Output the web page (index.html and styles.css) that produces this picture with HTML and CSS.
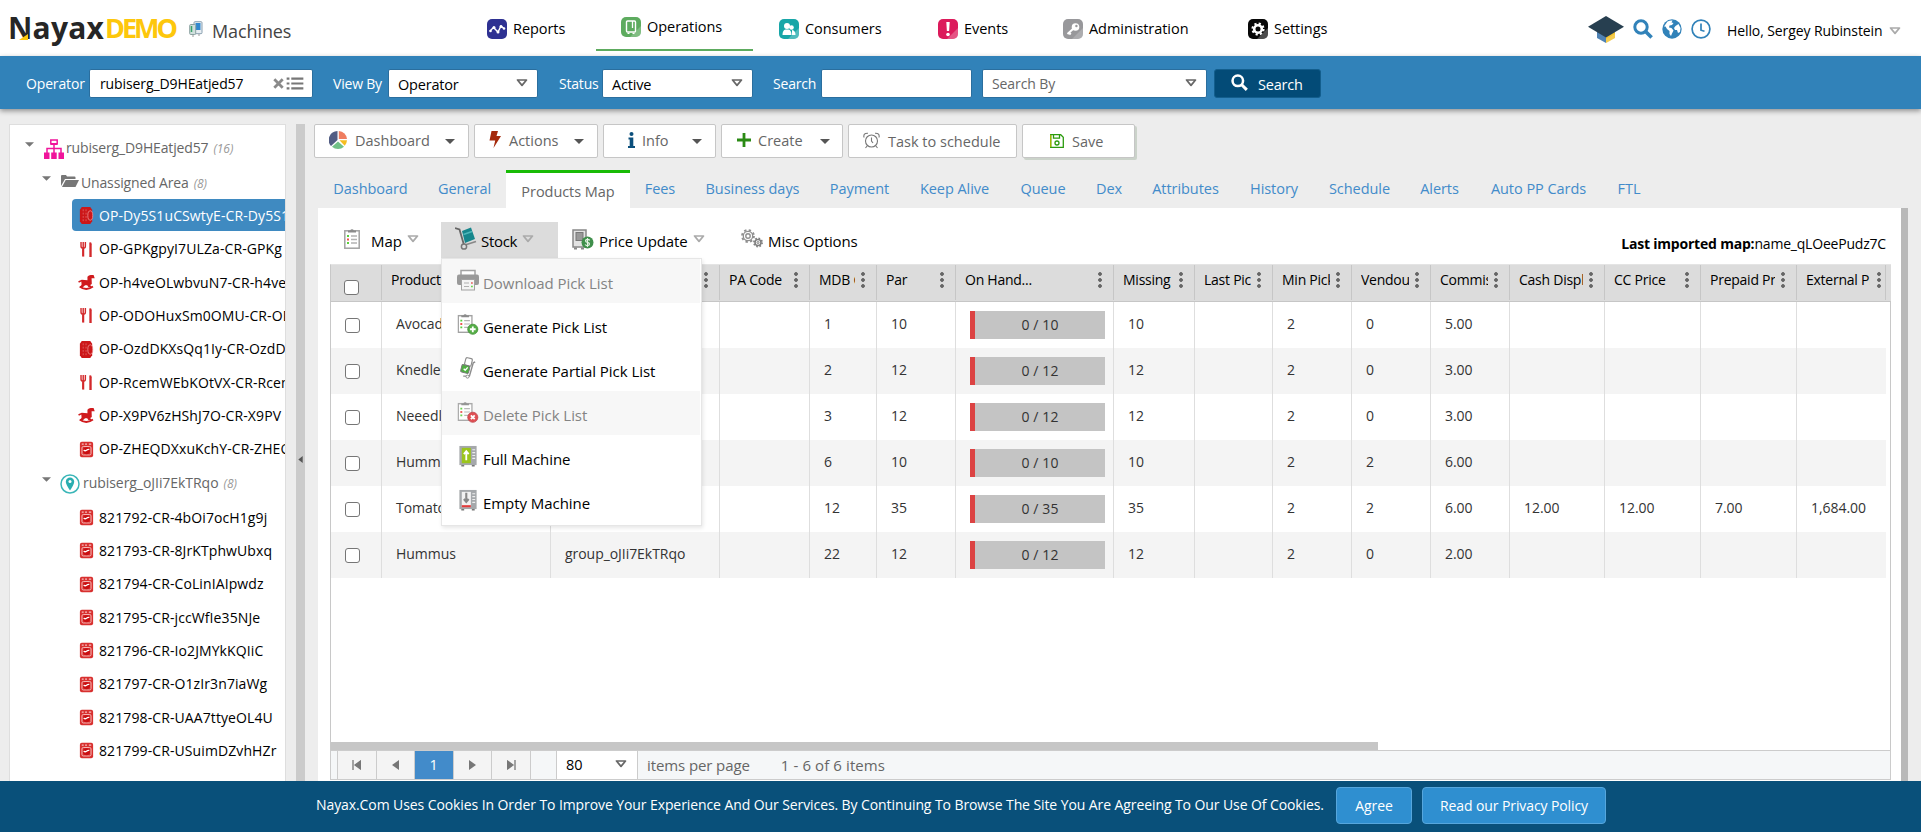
FILE: index.html
```html
<!DOCTYPE html>
<html lang="en">
<head>
<meta charset="utf-8">
<title>Machines</title>
<link rel="stylesheet" href="styles.css">
</head>
<body>
<svg class="defs" width="0" height="0">
  <defs>
    <symbol id="tri" viewBox="0 0 12 8"><path d="M1.5 1h9L6 6.4z" fill="none" stroke="currentColor" stroke-width="1.7" stroke-linejoin="round"/></symbol>
    <symbol id="caret" viewBox="0 0 10 5"><path d="M0 0h10L5 5z" fill="currentColor"/></symbol>
    <symbol id="search" viewBox="0 0 20 20"><circle cx="8" cy="8" r="6.2" fill="none" stroke="currentColor" stroke-width="3"/><path d="M12.6 12.6l6 6" stroke="currentColor" stroke-width="3.6"/></symbol>
    <symbol id="list" viewBox="0 0 18 14"><path d="M0 1.7h3M0 7h3M0 12.3h3M5 1.7h13M5 7h13M5 12.3h13" stroke="currentColor" stroke-width="2.4"/></symbol>
    <symbol id="barrel" viewBox="0 0 16 18"><path d="M3 0h9l2 3v12l-2 3H3L1 15V3z" fill="#cc1719"/><path d="M4.500 2.500v13M7.500 2.500v13" stroke="#e36a6b" stroke-width=".8" stroke-dasharray="2 1.500"/><ellipse cx="12" cy="9" rx="2.600" ry="5" fill="#cc1719" stroke="#ef9a9a" stroke-width=".8"/></symbol>
    <symbol id="fork" viewBox="0 0 16 18"><path d="M2.200 1v4.500q0 2 2.300 2t2.300-2V1M4.500 1v15" fill="none" stroke="#d3292b" stroke-width="1.500"/><path d="M4.500 8v8.500" stroke="#d3292b" stroke-width="2.200"/><path d="M11 1.500q2.500-1 2.500 2V17H11z" fill="#d3292b"/></symbol>
    <symbol id="horse" viewBox="0 0 18 18"><path d="M10 6.500V3q1.500-2.300 4-2h2.500l1.200 3.600h-3.300l.2 6-1.600 1 1.500 2.400h-3.300L9.700 12H7.500l-2.400 2H2.300l1.500-3-.3-3L1 9.200.2 7.700 4 6z" fill="#d01b1e"/><path d="M1.800 13.200q6.800 5.300 14 0" fill="none" stroke="#d01b1e" stroke-width="2"/></symbol>
    <symbol id="washer" viewBox="0 0 16 18"><rect x="1" y=".8" width="14" height="16.400" rx="2" fill="#d8302f"/><path d="M3 3.300h2M6.500 3.300h2M10.500 3.300h2.500" stroke="#f6c1c0" stroke-width="1.200"/><rect x="3.200" y="5.800" width="9.600" height="9" rx="1.500" fill="none" stroke="#f6c1c0" stroke-width="1"/><circle cx="8" cy="10.400" r="3.700" fill="#c90f12"/><path d="M5 9.500q1.500 1.500 3 .3t3-.8" fill="none" stroke="#fff" stroke-width="1.300"/></symbol>
    <symbol id="clip" viewBox="0 0 16 21"><rect x=".8" y="2.800" width="14.400" height="17.400" fill="#fff" stroke="#a2a2a2" stroke-width="1.500"/><path d="M4 4.500V2.500h2.200a1.900 1.900 0 0 1 3.600 0H12v2z" fill="#8b8b8b"/><path d="M3 8h2M3 15h2" stroke="#5bd03c" stroke-width="2"/><path d="M3 11.500h2" stroke="#ee5350" stroke-width="2"/><path d="M7 8h6M7 11.500h6M7 15h6" stroke="#b3b3b3" stroke-width="1.300"/></symbol>
  </defs>
</svg>

<header class="top">
  <div class="brand">
    <span class="logo">Nayax<svg class="logo-mark" viewBox="0 0 10 6"><path d="M0 6L9 0v6z" fill="#fdc70c"/></svg></span><span class="logo-demo">DEMO</span>
    <svg class="i-machines" viewBox="0 0 14 16"><rect x="5" y=".7" width="8" height="12" rx="1" fill="#e8eef3" stroke="#8aa0b0"/><rect x="6.500" y="2" width="5" height="7" fill="#3188cf"/><rect x=".7" y="3.500" width="6" height="10" rx="1" fill="#cfe0dc" stroke="#8aa0a0"/><path d="M2.500 5v6" stroke="#38a36a" stroke-width="1.500"/><path d="M3 15h2M9 14h2" stroke="#999"/></svg>
    <span class="page-name">Machines</span>
  </div>
  <nav class="nav">
    <a class="nav-item"><svg viewBox="0 0 20 20"><rect width="20" height="20" rx="5" fill="#2e3192"/><path d="M3 12l3.500-3.500L11 13l3-6 3 2.500" fill="none" stroke="#fff" stroke-width="1.400"/><g fill="#fff"><circle cx="3.500" cy="12" r="1.300"/><circle cx="7" cy="8.500" r="1.500"/><circle cx="11" cy="13" r="1.500"/><circle cx="14" cy="7.500" r="1.500"/><circle cx="17" cy="9.500" r="1.300"/></g></svg>Reports</a>
    <a class="nav-item active"><svg viewBox="0 0 20 20"><rect width="20" height="20" rx="5" fill="#5dab5f"/><path d="M20 9v6a5 5 0 0 1-5 5H9z" fill="#fff" opacity=".22"/><rect x="5.500" y="4" width="9" height="11" rx="1" fill="none" stroke="#fff" stroke-width="1.400"/><path d="M11.500 4v7M6.500 16.300h2M11.500 16.300h2" stroke="#fff" stroke-width="1.300"/></svg>Operations</a>
    <a class="nav-item"><svg viewBox="0 0 20 20"><rect width="20" height="20" rx="5" fill="#18a6a8"/><g fill="#fff"><circle cx="8" cy="7" r="3"/><path d="M3.500 16q0-5 3-5.500h3q3 .5 3 5.500z"/><circle cx="12.500" cy="8.500" r="2.300"/><path d="M13 16v-5q3.500.5 3.500 5z"/></g><path d="M20 9v6a5 5 0 0 1-5 5H9z" fill="#fff" opacity=".25"/></svg>Consumers</a>
    <a class="nav-item"><svg viewBox="0 0 20 20"><rect width="20" height="20" rx="5" fill="#dc1a5b"/><path d="M8.300 3h3.400l-.6 9H8.900z" fill="#fff"/><circle cx="10" cy="15.500" r="1.800" fill="#fff"/><path d="M20 9v6a5 5 0 0 1-5 5H9z" fill="#fff" opacity=".25"/></svg>Events</a>
    <a class="nav-item"><svg viewBox="0 0 20 20"><rect width="20" height="20" rx="5" fill="#98989b"/><circle cx="12.500" cy="8" r="3.800" fill="#fff"/><circle cx="13.400" cy="7" r="1.200" fill="#98989b"/><path d="M10.500 9.500L4.500 15M6 13.500l1.700 2" stroke="#fff" stroke-width="2"/><path d="M20 9v6a5 5 0 0 1-5 5H9z" fill="#fff" opacity=".2"/></svg>Administration</a>
    <a class="nav-item"><svg viewBox="0 0 20 20"><rect width="20" height="20" rx="5" fill="#080808"/><path d="M20 9v6a5 5 0 0 1-5 5H9z" fill="#fff" opacity=".28"/><circle cx="10" cy="10" r="5.500" fill="none" stroke="#fff" stroke-width="2.200" stroke-dasharray="2.160 2.160"/><circle cx="10" cy="10" r="3.800" fill="none" stroke="#fff" stroke-width="2.600"/></svg>Settings</a>
  </nav>
  <div class="user">
    <svg class="i-cap" viewBox="0 0 36 28"><path d="M9 14v8l9 5V14z" fill="#4f82b4"/><path d="M27 14v8l-9 5V14z" fill="#f3c331"/><path d="M27 18v4l-9 5v-4z" fill="#fff" opacity=".15"/><path d="M18 0l18 10.800L18 21.500 0 10.800z" fill="#273f50"/></svg>
    <svg class="i-20"><use href="#search"/></svg>
    <svg class="i-20" viewBox="0 0 20 20"><circle cx="10" cy="10" r="9.700" fill="currentColor"/><path d="M5.500 2.500q3-1.500 5-1l-1 2 2 .5-1.500 2-2.500.500-.5 2 2.500.5 2 2.500-1.500 3-1 2.500-1.500-2v-3L5 10 3.500 7.500 2 7.500zM13.500 7l3-2 2 4-.5 4-2 1-1-3h-2l-1-2z" fill="#fff"/></svg>
    <svg class="i-20" viewBox="0 0 20 20"><circle cx="10" cy="10" r="8.900" fill="none" stroke="currentColor" stroke-width="1.700"/><path d="M10 4.500v6.700l3.500 1" fill="none" stroke="currentColor" stroke-width="1.700"/></svg>
    <span class="hello">Hello, Sergey Rubinstein</span>
    <svg class="tri pale"><use href="#tri"/></svg>
  </div>
</header>

<section class="filters">
  <label class="f-label l-operator">Operator</label>
  <div class="field w-operator"><span class="field-text">rubiserg_D9HEatjed57</span><svg class="i-clear" viewBox="0 0 11 11"><path d="M1.300 1.300l8.400 8.400M9.700 1.300L1.300 9.700" stroke="#8a8a8a" stroke-width="2.800"/></svg><svg class="i-list"><use href="#list"/></svg></div>
  <label class="f-label l-view">View By</label>
  <div class="field w-view"><span class="field-text">Operator</span><svg class="tri"><use href="#tri"/></svg></div>
  <label class="f-label l-status">Status</label>
  <div class="field w-status"><span class="field-text">Active</span><svg class="tri"><use href="#tri"/></svg></div>
  <label class="f-label l-search">Search</label>
  <div class="field w-search"></div>
  <div class="field w-by"><span class="field-text muted">Search By</span><svg class="tri"><use href="#tri"/></svg></div>
  <button class="search-btn"><svg><use href="#search"/></svg>Search</button>
</section>

<main class="main">
  <aside class="tree">
    <div class="node root"><svg class="caret"><use href="#caret"/></svg><svg class="i-org" viewBox="0 0 20 20"><g fill="none" stroke="#f0149b" stroke-width="1.500"><rect x="6.800" y="1" width="6.400" height="4"/><path d="M10 5v9M3 14V9.500h14V14"/></g><g fill="#f0149b"><path d="M7 4h6v2H7z"/><rect y="13.500" width="5.500" height="6.500"/><rect x="7.200" y="13.500" width="5.500" height="6.500"/><rect x="14.500" y="13.500" width="5.500" height="6.500"/></g></svg><span>rubiserg_D9HEatjed57</span><i>(16)</i></div>
    <div class="node area"><svg class="caret"><use href="#caret"/></svg><svg class="i-folder" viewBox="0 0 18 12"><path d="M0 11V1q0-1 1-1h4l1 1.500h7.500q1 0 1 1V4H4z" fill="#777"/><path d="M4.700 5H18l-3.500 7H1z" fill="#777"/></svg><span>Unassigned Area</span><i>(8)</i></div>
    <div class="leaf selected"><svg><use href="#barrel"/></svg><span>OP-Dy5S1uCSwtyE-CR-Dy5S1</span></div>
    <div class="leaf"><svg><use href="#fork"/></svg><span>OP-GPKgpyI7ULZa-CR-GPKg</span></div>
    <div class="leaf"><svg><use href="#horse"/></svg><span>OP-h4veOLwbvuN7-CR-h4ve</span></div>
    <div class="leaf"><svg><use href="#fork"/></svg><span>OP-ODOHuxSm0OMU-CR-OD</span></div>
    <div class="leaf"><svg><use href="#barrel"/></svg><span>OP-OzdDKXsQq1Iy-CR-OzdD</span></div>
    <div class="leaf"><svg><use href="#fork"/></svg><span>OP-RcemWEbKOtVX-CR-Rcem</span></div>
    <div class="leaf"><svg><use href="#horse"/></svg><span>OP-X9PV6zHShJ7O-CR-X9PV</span></div>
    <div class="leaf"><svg><use href="#washer"/></svg><span>OP-ZHEQDXxuKchY-CR-ZHEQ</span></div>
    <div class="node site"><svg class="caret"><use href="#caret"/></svg><svg class="i-pin" viewBox="0 0 20 20"><circle cx="10" cy="10" r="9" fill="none" stroke="#3bb6b8" stroke-width="1.500"/><path d="M10 16.500Q5.800 10.500 5.800 7.800a4.200 4.200 0 0 1 8.400 0Q14.200 10.500 10 16.500z" fill="#2aaeb0"/><circle cx="10" cy="7.500" r="1.500" fill="#fff"/></svg><span>rubiserg_oJIi7EkTRqo</span><i>(8)</i></div>
    <div class="leaf"><svg><use href="#washer"/></svg><span>821792-CR-4bOi7ocH1g9j</span></div>
    <div class="leaf"><svg><use href="#washer"/></svg><span>821793-CR-8JrKTphwUbxq</span></div>
    <div class="leaf"><svg><use href="#washer"/></svg><span>821794-CR-CoLinIAIpwdz</span></div>
    <div class="leaf"><svg><use href="#washer"/></svg><span>821795-CR-jccWfIe35NJe</span></div>
    <div class="leaf"><svg><use href="#washer"/></svg><span>821796-CR-Io2JMYkKQIiC</span></div>
    <div class="leaf"><svg><use href="#washer"/></svg><span>821797-CR-O1zIr3n7iaWg</span></div>
    <div class="leaf"><svg><use href="#washer"/></svg><span>821798-CR-UAA7ttyeOL4U</span></div>
    <div class="leaf"><svg><use href="#washer"/></svg><span>821799-CR-USuimDZvhHZr</span></div>
  </aside>
  <div class="splitter"><svg viewBox="0 0 5 8"><path d="M5 0v8L0 4z" fill="#555"/></svg></div>

  <section class="content">
    <div class="actions">
      <button class="btn b-dash"><svg class="i-pie" viewBox="0 0 18 18"><path d="M8.500 9V0A9 9 0 0 0 2 15z" fill="#525d84"/><path d="M9.800 8V0A8.500 8.500 0 0 1 18 8z" fill="#ef7d60"/><path d="M10.500 9.300H18a8.500 8.500 0 0 1-2.300 5.500z" fill="#f5bd1f"/><path d="M9 10.500l6 5.200a9 9 0 0 1-12 0z" fill="#71c087"/></svg><span>Dashboard</span><svg class="drop"><use href="#caret"/></svg></button>
      <button class="btn b-act"><svg class="i-bolt" viewBox="0 0 12 17"><path d="M2.500 0H9L7.500 5H12L4.500 17l1.700-7.500H.500z" fill="#a52a0c"/></svg><span>Actions</span><svg class="drop"><use href="#caret"/></svg></button>
      <button class="btn b-info"><svg class="i-info" viewBox="0 0 7 16"><circle cx="3.500" cy="2" r="2" fill="#0b4f7c"/><path d="M.5 5.500h4.800V14H7v2H0v-2h1.700V7.500H.5z" fill="#0b4f7c"/></svg><span>Info</span><svg class="drop"><use href="#caret"/></svg></button>
      <button class="btn b-create"><svg class="i-plus" viewBox="0 0 14 14"><path d="M7 0v14M0 7h14" stroke="#2a8a14" stroke-width="2.800"/></svg><span>Create</span><svg class="drop"><use href="#caret"/></svg></button>
      <button class="btn b-task"><svg class="i-alarm" viewBox="0 0 17 17" fill="none" stroke="#777" stroke-width="1.100"><circle cx="8.500" cy="9" r="6"/><path d="M8.500 5.500V9l1.500 2M1 5.500Q0 1 5 1.300M16 5.500q1-4.500-4-4.200M4.500 13.500L2.500 16M12.500 13.500l2 2.500"/></svg><span>Task to schedule</span></button>
      <button class="btn b-save"><svg class="i-save" viewBox="0 0 14 14" fill="none" stroke="#2b9b0e" stroke-width="1.300"><path d="M.7.700h10l2.600 2.600v10H.7zM3.500.7v3.500h6V.7"/><circle cx="7" cy="9" r="2"/><path d="M.7 1v12" stroke="#a4b800"/></svg><span>Save</span></button>
    </div>

    <div class="tabs">
      <a>Dashboard</a><a>General</a><a class="on">Products Map</a><a>Fees</a><a>Business days</a><a>Payment</a><a>Keep Alive</a><a>Queue</a><a>Dex</a><a>Attributes</a><a>History</a><a>Schedule</a><a>Alerts</a><a>Auto PP Cards</a><a>FTL</a>
    </div>

    <div class="panel">
      <div class="menu">
        <div class="m-item m-map"><svg class="i-clip"><use href="#clip"/></svg><span>Map</span><svg class="tri pale"><use href="#tri"/></svg></div>
        <div class="m-item m-stock"><svg class="i-truck" viewBox="0 0 22 23"><path d="M0 1l4.500 1.500L9 18" fill="none" stroke="#666" stroke-width="1.800"/><path d="M7 4l9-3.500L20 12l-10 4z" fill="#16868c"/><path d="M8.500 7.500l8.500-3" stroke="#4fb7bb" stroke-width="1.500"/><path d="M10 18l11-3.500" stroke="#888" stroke-width="1.800"/><circle cx="9" cy="19.500" r="2.600" fill="#ddd" stroke="#777" stroke-width="1.500"/></svg><span>Stock</span><svg class="tri pale"><use href="#tri"/></svg>
          <div class="dropdown">
            <div class="d-item off"><svg viewBox="0 0 22 22"><path d="M4 6V1.500h14V6" fill="#fff" stroke="#999" stroke-width="1.500"/><rect y="5.500" width="22" height="10.500" rx="2" fill="#8f8f8f"/><rect x="4.500" y="10.500" width="13" height="10.500" fill="#f4f4f4" stroke="#999"/><path d="M7 14h5M7 17.500h5" stroke="#aaa"/><path d="M14 14h1.800" stroke="#e5504c" stroke-width="1.600"/><path d="M14 17.500h1.800" stroke="#5bd03c" stroke-width="1.600"/></svg>Download Pick List</div>
            <div class="d-item"><svg viewBox="0 0 22 23"><use href="#clip" width="16" height="21"/><circle cx="16" cy="17" r="5.300" fill="#55ad46" stroke="#3f8f35" stroke-width=".8"/><path d="M16 14v6M13 17h6" stroke="#fff" stroke-width="1.900"/></svg>Generate Pick List</div>
            <div class="d-item"><svg viewBox="0 0 22 23"><rect x="8" y="1" width="7" height="8" rx="1.500" transform="rotate(14 11 5)" fill="#fff" stroke="#8d8d8d" stroke-width="1.200"/><path d="M18.500 5l-2 1L12.500 20H6" fill="none" stroke="#8d8d8d" stroke-width="1.500"/><rect x="4" y="8.500" width="8.500" height="8" rx="1.500" transform="rotate(14 8 12)" fill="#4fae42" stroke="#777"/><path d="M6.500 12.300l1.600 1.600 2.600-3" fill="none" stroke="#fff" stroke-width="1.400"/><circle cx="10.500" cy="20.500" r="1.600" fill="#fff" stroke="#888"/></svg>Generate Partial Pick List</div>
            <div class="d-item off"><svg viewBox="0 0 22 23"><use href="#clip" width="16" height="21"/><circle cx="16" cy="17" r="5.300" fill="#dd3d42" stroke="#b93338" stroke-width=".8"/><path d="M14 15l4 4M18 15l-4 4" stroke="#fff" stroke-width="1.900"/></svg>Delete Pick List</div>
            <div class="d-item"><svg viewBox="0 0 22 23"><rect x="2" y="1" width="18" height="20" fill="#a5a8ab"/><path d="M4 21v1.500h3V21M15 21v1.500h3V21" fill="#777"/><rect x="4.500" y="3" width="9.500" height="16" fill="#9bc51c"/><path d="M9.200 16V7M6.700 9.500l2.500-3 2.500 3" fill="none" stroke="#fff" stroke-width="1.900"/><path d="M15.500 5h3M15.500 8h3M15.500 11h3M15.500 14h3" stroke="#eee" stroke-width="1.200"/></svg>Full Machine</div>
            <div class="d-item"><svg viewBox="0 0 22 23"><rect x="2" y="1" width="18" height="20" fill="#a5a8ab"/><path d="M4 21v1.500h3V21M15 21v1.500h3V21" fill="#777"/><rect x="4.500" y="3" width="9.500" height="16" fill="#f2f2f2"/><path d="M9.200 4v9M6.700 10.500l2.500 3 2.500-3" fill="none" stroke="#888" stroke-width="2.200"/><path d="M4.500 18h9.500" stroke="#e23b3b" stroke-width="2.200"/><path d="M15.500 5h3M15.500 8h3M15.500 11h3M15.500 14h3" stroke="#eee" stroke-width="1.200"/></svg>Empty Machine</div>
          </div>
        </div>
        <div class="m-item m-price"><svg class="i-price" viewBox="0 0 22 21"><rect x="1" y="1" width="13" height="17" fill="#e3e3e3" stroke="#888" stroke-width="1.500"/><rect x="4" y="3.500" width="7" height="8" fill="#999" stroke="#777"/><path d="M2 19.500h3M9 19.500h3" stroke="#888" stroke-width="1.800"/><circle cx="15.500" cy="13.500" r="6" fill="#3f8f4b"/><path d="M17.800 11.300q-.8-1-2.300-1-2 0-2 1.500 0 1.300 2 1.600t2 1.700q0 1.500-2 1.500-1.600 0-2.400-1.100M15.500 9v9" fill="none" stroke="#e3f3e3" stroke-width="1.200"/></svg><span>Price Update</span><svg class="tri pale"><use href="#tri"/></svg></div>
        <div class="m-item m-misc"><svg class="i-gears" viewBox="0 0 22 19" fill="none"><g stroke="#8f8f8f"><circle cx="7" cy="7" r="5.900" stroke-width="2" stroke-dasharray="2.320 2.320"/><circle cx="7" cy="7" r="4.700" stroke-width="1.300"/><circle cx="7" cy="7" r="2.200" stroke-width="1.400"/></g><g stroke="#7f7f7f"><circle cx="17" cy="13.500" r="4.100" stroke-width="1.700" stroke-dasharray="1.610 1.610"/><circle cx="17" cy="13.500" r="3" stroke-width="1.600"/><circle cx="17" cy="13.500" r="1"/></g></svg><span>Misc Options</span></div>
        <div class="imported"><b>Last imported map:</b>name_qLOeePudz7C</div>
      </div>

      <div class="grid">
        <div class="grid-head">
          <table>
            <colgroup><col class="c1"><col class="c2"><col class="c2"><col class="c4"><col class="c5"><col class="c6"><col class="c7"><col class="c8"><col class="c9"><col class="c10"><col class="c11"><col class="c11"><col class="c13"><col class="c14"><col class="c14"><col class="c16"></colgroup>
            <tr><th class="ck"><input type="checkbox"></th><th><div>Product</div></th><th class="dots"></th><th class="dots"><div>PA Code</div></th><th class="dots"><div>MDB Code</div></th><th class="dots"><div>Par</div></th><th class="dots"><div>On Hand...</div></th><th class="dots"><div>Missing</div></th><th class="dots"><div>Last Pick</div></th><th class="dots"><div>Min Pick</div></th><th class="dots"><div>Vendout</div></th><th class="dots"><div>Commission</div></th><th class="dots"><div>Cash Display</div></th><th class="dots"><div>CC Price</div></th><th class="dots"><div>Prepaid Price</div></th><th class="dots end"><div>External Price</div></th></tr>
          </table>
        </div>
        <div class="grid-body">
          <table>
            <colgroup><col class="c1"><col class="c2"><col class="c2"><col class="c4"><col class="c5"><col class="c6"><col class="c7"><col class="c8"><col class="c9"><col class="c10"><col class="c11"><col class="c11"><col class="c13"><col class="c14"><col class="c14"><col class="c16"></colgroup>
            <tr><td class="ck"><input type="checkbox"></td><td>Avocado</td><td></td><td></td><td>1</td><td>10</td><td><div class="bar">0 / 10</div></td><td>10</td><td></td><td>2</td><td>0</td><td>5.00</td><td></td><td></td><td></td><td></td></tr>
            <tr><td class="ck"><input type="checkbox"></td><td>Knedle</td><td></td><td></td><td>2</td><td>12</td><td><div class="bar">0 / 12</div></td><td>12</td><td></td><td>2</td><td>0</td><td>3.00</td><td></td><td></td><td></td><td></td></tr>
            <tr><td class="ck"><input type="checkbox"></td><td>Neeedle</td><td></td><td></td><td>3</td><td>12</td><td><div class="bar">0 / 12</div></td><td>12</td><td></td><td>2</td><td>0</td><td>3.00</td><td></td><td></td><td></td><td></td></tr>
            <tr><td class="ck"><input type="checkbox"></td><td>Hummus</td><td></td><td></td><td>6</td><td>10</td><td><div class="bar">0 / 10</div></td><td>10</td><td></td><td>2</td><td>2</td><td>6.00</td><td></td><td></td><td></td><td></td></tr>
            <tr><td class="ck"><input type="checkbox"></td><td>Tomato</td><td></td><td></td><td>12</td><td>35</td><td><div class="bar">0 / 35</div></td><td>35</td><td></td><td>2</td><td>2</td><td>6.00</td><td>12.00</td><td>12.00</td><td>7.00</td><td>1,684.00</td></tr>
            <tr><td class="ck"><input type="checkbox"></td><td>Hummus</td><td>group_oJIi7EkTRqo</td><td></td><td>22</td><td>12</td><td><div class="bar">0 / 12</div></td><td>12</td><td></td><td>2</td><td>0</td><td>2.00</td><td></td><td></td><td></td><td></td></tr>
          </table>
          <div class="hscroll"></div>
        </div>
        <div class="pager">
          <a class="pg"><svg viewBox="0 0 9 10"><path d="M1 0v10M8.500 1v8L3 5z" fill="#777" stroke="#777" stroke-width="1.300"/></svg></a>
          <a class="pg"><svg viewBox="0 0 9 10"><path d="M8 0v10L1 5z" fill="#777"/></svg></a>
          <a class="pg cur">1</a>
          <a class="pg"><svg viewBox="0 0 9 10"><path d="M1 0v10l7-5z" fill="#777"/></svg></a>
          <a class="pg"><svg viewBox="0 0 9 10"><path d="M8 0v10M.5 1v8L6 5z" fill="#777" stroke="#777" stroke-width="1.300"/></svg></a>
          <div class="pg-size"><span>80</span><svg class="tri"><use href="#tri"/></svg></div>
          <span class="per">items per page</span><span class="range">1 - 6 of 6 items</span>
        </div>
      </div>
    </div>
  </section>
  <div class="vscroll"></div>
</main>

<footer class="cookies">
  <span>Nayax.Com Uses Cookies In Order To Improve Your Experience And Our Services. By Continuing To Browse The Site You Are Agreeing To Our Use Of Cookies.</span>
  <button class="agree">Agree</button>
  <button class="policy">Read our Privacy Policy</button>
</footer>
</body>
</html>
```
FILE: styles.css
```css
* { box-sizing: border-box; }
html, body { margin: 0; height: 832px; overflow: hidden; }
body {
  display: flex; flex-direction: column;
  background: #ededed; color: #000;
  font: 14.500px/20px "Open Sans", "Noto Sans", sans-serif;
  letter-spacing: 0;
}
.defs { position: absolute; }
svg { flex: none; display: block; }
button { font: inherit; letter-spacing: inherit; padding: 0; }
.tri { width: 12px; height: 8px; color: #666; }
.tri.pale { color: #aaa; }

/* Header */
.top { height: 56px; flex: none; background: #fff; display: flex; }
.brand { width: 487px; flex: none; display: flex; padding-left: 8px; }
.logo, .logo-demo { font-weight: 700; font-size: 30px; line-height: 36px; padding-top: 10px; }
.logo { position: relative; width: 97px; color: #262626; letter-spacing: .2px; }
.logo-mark { position: absolute; left: 11px; top: 34px; width: 10px; height: 6px; }
.logo-demo { width: 76px; color: #fdc70c; font-size: 27px; letter-spacing: -3px; }
.i-machines { width: 14px; height: 16px; margin: 21px 9px 0 8px; }
.page-name { font-size: 18px; line-height: 24px; margin-top: 19px; color: #444; letter-spacing: -.1px; }
.nav { width: 1101px; flex: none; display: grid; grid-template-columns: 109px 183px 159px 125px 185px 100px; }
.nav-item { display: flex; gap: 6px; height: 51px; padding-top: 19px; letter-spacing: -.050px; }
.nav-item svg { width: 20px; height: 20px; }
.nav-item.active { width: 157px; padding: 17px 0 0 25px; border-bottom: 2px solid #5dab5f; }
.user { display: flex; align-items: flex-start; color: #3182b9; padding-top: 19px; gap: 9px; }
.i-cap { width: 36px; height: 28px; margin-top: -3px; }
.i-20 { width: 20px; height: 20px; }
.hello { color: #000; margin: 2px 0 0 7px; width: 157px; white-space: nowrap; font-size: 14px; letter-spacing: -.1px; }
.user .tri { margin: 8px 0 0 -4px; }

/* Filter bar */
.filters {
  height: 53px; flex: none; background: #3182b9; color: #fff;
  display: flex; align-items: center; padding: 2px 0 0 26px;
  box-shadow: 0 2px 5px rgba(0,0,0,.4); position: relative;
  font-size: 14px; letter-spacing: -.2px;
}
.f-label { white-space: nowrap; flex: none; }
.l-operator { width: 63px; letter-spacing: -.15px; }
.l-view { width: 55px; margin-left: 20px; }
.l-status { width: 43px; margin-left: 21px; }
.l-search { width: 48px; margin-left: 20px; }
.field { height: 29px; flex: none; background: #fff; color: #000; border: 1px solid #2a6e9e; border-radius: 2px; display: flex; align-items: center; padding: 0 9px; }
.field-text { flex: 1; letter-spacing: -.1px; }
.w-view .field-text, .w-status .field-text { padding-top: 2px; font-size: 14.500px; letter-spacing: -.2px; }
.field .tri { margin-top: -2px; }
.muted { color: #666; }
.w-operator { width: 224px; padding: 0 8px 0 10px; }
.w-view { width: 150px; }
.w-status { width: 151px; }
.w-search { width: 151px; }
.w-by { width: 225px; margin-left: 10px; }
.i-clear { width: 11px; height: 11px; margin-right: 2px; }
.i-list { width: 18px; height: 13px; color: #777; }
.search-btn { width: 107px; height: 29px; margin-left: 7px; background: #034b77; color: #fff; border: 1px solid #135e8d; border-radius: 3px; display: flex; align-items: center; padding: 2px 0 0 16px; gap: 10px; font-size: 14.500px; }
.search-btn svg { width: 17px; height: 17px; margin-top: -4px; }

/* Tree */
.main { flex: 1; min-height: 0; display: flex; padding: 15px 0 0 9px; }
.tree { width: 277px; flex: none; background: #fff; border: 1px solid #dedede; border-bottom: 0; overflow: hidden; font-size: 14px; letter-spacing: .1px; }
.node { display: flex; align-items: center; color: #666; height: 35px; white-space: nowrap; letter-spacing: -.050px; }
.node .caret { width: 9px; height: 5px; color: #777; margin-top: -8px; }
.node i { font-size: 12px; color: #999; margin: 2px 0 0 5px; }
.root { padding-left: 15px; height: 36px; margin-top: 5px; }
.root span { letter-spacing: -.15px; }
.i-org { width: 20px; height: 20px; margin: 2px 2px 0 10px; }
.area { padding-left: 32px; height: 33px; }
.area span { letter-spacing: -.15px; }
.i-folder { width: 18px; height: 12px; margin: -3px 2px 0 10px; }
.site { padding-left: 32px; height: 35px; padding-top: 1px; }
.i-pin { width: 20px; height: 20px; margin: 2px 3px 0 9px; }
.leaf { height: 33.350px; margin-left: 62px; padding: 1px 0 0 6px; display: flex; align-items: center; gap: 4px; border-radius: 4px 0 0 4px; white-space: nowrap; }
.leaf svg { width: 17px; height: 17px; }
.leaf.selected { height: 32px; margin-bottom: 1px; background: #3f8ac1; color: #fff; }
.splitter { width: 9px; flex: none; margin-left: 10px; background: #cbcbcb; padding: 332px 0 0 2px; }
.splitter svg { width: 5px; height: 7px; }

/* Action buttons */
.content { width: 1596px; flex: none; }
.actions { display: flex; gap: 5px; padding-left: 9px; }
.btn { height: 34px; background: #fff; border: 1px solid #c6c6c6; border-radius: 2px; color: #666; display: flex; align-items: center; font-size: 14.500px; position: relative; }
.btn span { flex: 1; text-align: left; margin-top: -1px; }
.drop { width: 10px; height: 5px; margin-right: 13px; color: #555; }
.b-dash { width: 155px; padding-left: 14px; }
.b-act { width: 124px; padding-left: 14px; }
.b-info { width: 113px; padding-left: 24px; }
.b-create { width: 122px; padding-left: 15px; }
.b-create .drop { margin-right: 12px; }
.b-task { width: 169px; padding-left: 14px; }
.b-save { width: 113px; padding-left: 27px; box-shadow: 2px 2px 0 #cbd3ca; }
.i-pie { width: 18px; height: 18px; margin-right: 8px; margin-top: -2px; }
.i-bolt { width: 12px; height: 17px; margin-right: 8px; margin-top: -3px; }
.i-info { width: 7px; height: 16px; margin-right: 7px; margin-top: -3px; }
.i-plus { width: 14px; height: 14px; margin-right: 7px; margin-top: -3px; }
.i-alarm { width: 17px; height: 17px; margin-right: 8px; margin-top: -1px; }
.i-save { width: 14px; height: 14px; margin-right: 8px; }
.b-task span, .b-save span { margin-top: 1px; }

/* Tabs */
.tabs { height: 38px; margin: 12px 0 0 13px; display: grid; grid-template-columns: 105px 83px 124px 60px 125px 89px 101px 76px 56px 97px 80px 91px 69px 129px 52px; }
.tabs a { text-align: center; color: #428bca; padding-top: 9px; font-size: 14.500px; letter-spacing: -.050px; white-space: nowrap; }
.tabs .on { background: #fff; border-top: 3px solid #18bb06; color: #666; padding-top: 9px; }

/* Panel */
.panel { margin-left: 13px; background: #fff; height: 573px; padding: 14px 10px 0 12px; }
.menu { display: flex; height: 42px; }
.m-item { height: 37px; display: flex; align-items: center; font-size: 15px; letter-spacing: -.1px; white-space: nowrap; }
.m-item > .tri { margin: -3px 0 0 5px; }
.m-map { width: 111px; padding-left: 14px; }
.m-stock { width: 117px; padding-left: 14px; background: #dcdcdc; position: relative; letter-spacing: -.3px; }
.m-price { width: 169px; padding-left: 14px; }
.m-misc { width: 300px; padding-left: 14px; }
.i-clip { width: 16px; height: 21px; margin: -5px 11px 0 0; }
.i-truck { width: 22px; height: 23px; margin: -5px 4px 0 0; }
.i-price { width: 22px; height: 21px; margin: -2px 5px 0 0; }
.i-gears { width: 22px; height: 19px; margin: -4px 5px 0 0; }
.imported { margin: 12px 5px 0 auto; font-size: 14px; letter-spacing: -.2px; white-space: nowrap; }
.dropdown { position: absolute; z-index: 5; left: 0; top: 36px; width: 261px; padding: 0 1px 2px 0; background: #fff; border: 1px solid #e6e6e6; box-shadow: 1px 2px 4px rgba(0,0,0,.1); letter-spacing: -.050px; }
.d-item { height: 44px; display: flex; align-items: center; padding-left: 15px; gap: 4px; padding-top: 3px; }
.d-item svg { width: 22px; height: 22px; margin-top: -6px; }
.d-item.off { background: #f7f7f7; color: #848484; }
.d-item.off svg { opacity: .9; }

/* Grid */
.grid { width: 1561px; }
.grid-head { height: 38px; background: #dcdcdc; border-left: 1px solid #c8c8c8; border-bottom: 1px solid #c6c6c6; border-top: 1px solid #e4e4e4; }
table { width: 1555px; table-layout: fixed; border-collapse: separate; border-spacing: 0; }
.c1 { width: 50px; } .c2 { width: 169px; } .c4 { width: 90px; } .c5 { width: 67px; } .c6 { width: 79px; } .c7 { width: 158px; } .c8 { width: 81px; } .c9 { width: 78px; } .c10, .c11 { width: 79px; } .c13 { width: 95px; } .c14 { width: 96px; } .c16 { width: 90px; }
th { height: 35px; padding: 0 21px 6px 9px; font-weight: 400; text-align: left; border-left: 1px solid #c6c6c6; position: relative; letter-spacing: -.25px; font-size: 14px; }
th div { overflow: hidden; white-space: nowrap; }
th.ck { padding: 15px 0 0 13px; border-left: 0; vertical-align: top; }
th.end { border-right: 1px solid #c6c6c6; padding-right: 15px; }
th.dots::after { content: ""; position: absolute; right: 11px; top: 7px; width: 4px; height: 16px; background: radial-gradient(circle at 2px 2px, #666 1.500px, transparent 2.200px) 0 0 / 4px 6px; }
th.end::after { right: 4px; }
input { appearance: none; display: block; width: 15px; height: 15px; margin: 0; border: 1px solid #767676; border-radius: 3px; background: #fff; }
.grid-body { height: 448px; border-left: 1px solid #c8c8c8; border-right: 1px solid #c8c8c8; display: flex; flex-direction: column; justify-content: space-between; }
td { height: 46px; padding: 0 0 3px 14px; border-left: 1px solid #dedede; font-size: 14px; color: #333; letter-spacing: -.050px; }
tr:nth-child(even) td { background: #f4f4f4; }
td.ck { border-left: 0; padding: 1px 0 0 14px; }
.bar { width: 135px; height: 28px; background: #c4c4c4; border-left: 5px solid #dc4343; text-align: center; line-height: 27px; margin-top: 2px; letter-spacing: .1px; }
.hscroll { width: 1047px; height: 8px; background: #c6c6c6; }

/* Pager */
.pager { height: 30px; border: 1px solid #ccc; background: #f5f7f8; display: flex; align-items: center; color: #666; padding-left: 6px; }
.pg { width: 38.500px; height: 28px; border-left: 1px solid #ccc; background: #f4f4f4; display: flex; align-items: center; justify-content: center; }
.pg svg { width: 9px; height: 10px; }
.pg.cur { background: #428bca; color: #fff; }
.pg:nth-child(5) { width: 65px; padding-right: 26px; background: linear-gradient(90deg, #f4f4f4 38px, #ccc 38px, #ccc 39px, #f5f7f8 39px); }
.pg-size { width: 82px; height: 28px; margin-right: 9px; background: #fff; border: solid #ccc; border-width: 0 1px; color: #000; display: flex; align-items: center; justify-content: space-between; padding: 0 10px 0 9px; }
.pg-size .tri { margin-top: -3px; }
.per { margin-right: 31px; font-size: 15px; letter-spacing: -.1px; }
.range { font-size: 15px; letter-spacing: .1px; }
.vscroll { width: 7px; background: #b9b9b9; margin: 84px 0 0 0; }

/* Cookie notice */
.cookies { height: 51px; flex: none; background: #09507a; color: #fff; display: flex; padding: 6px 0 0 316px; position: relative; font-size: 14px; }
.cookies span { width: 1020px; white-space: nowrap; margin-top: 8px; letter-spacing: -.090px; }
.cookies button { height: 37px; background: #2f8fd0; color: #fff; border: 1px solid #56a6dc; border-radius: 4px; letter-spacing: -.1px; }
.agree { width: 76px; margin-right: 10px; }
.policy { width: 184px; }
```
